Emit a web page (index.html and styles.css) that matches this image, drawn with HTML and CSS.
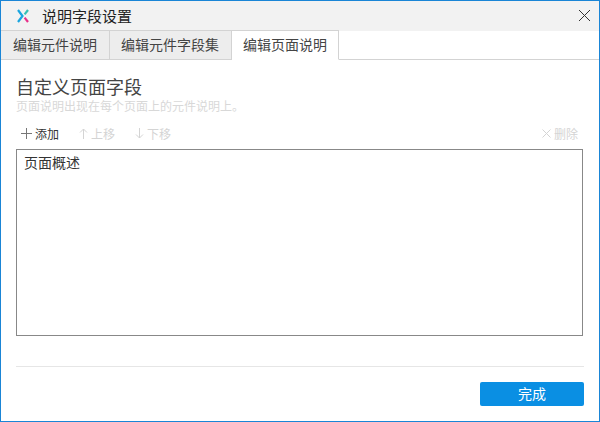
FILE: index.html
```html
<!DOCTYPE html>
<html lang="zh">
<head>
<meta charset="utf-8">
<title>说明字段设置</title>
<link rel="stylesheet" href="styles.css">
</head>
<body>
<div class="window">
  <header class="titlebar">
    <svg class="logo" width="12" height="14" viewBox="0 0 12 14">
      <path d="M1 1 L5.5 7 L1 13" fill="none" stroke="#1aa5df" stroke-width="2.2"/>
      <path d="M11 1 L7.6 5.4" fill="none" stroke="#35c0b5" stroke-width="2.2"/>
      <path d="M7.6 8.6 L11 13" fill="none" stroke="#e8308a" stroke-width="2.2"/>
    </svg>
    <span class="title">说明字段设置</span>
    <svg class="close" width="11" height="11" viewBox="0 0 11 11">
      <path d="M0 0 L11 11 M11 0 L0 11" stroke="#333" stroke-width="1" fill="none"/>
    </svg>
  </header>
  <nav class="tabs">
    <div class="tab">编辑元件说明</div>
    <div class="tab">编辑元件字段集</div>
    <div class="tab active">编辑页面说明</div>
  </nav>
  <main class="content">
    <h1 class="heading">自定义页面字段</h1>
    <p class="hint">页面说明出现在每个页面上的元件说明上。</p>
    <div class="toolbar">
      <span class="tool"><svg width="11" height="11" viewBox="0 0 11 11"><path d="M5.5 0 V11 M0 5.5 H11" stroke="#777" fill="none"/></svg>添加</span>
      <span class="tool off"><svg width="9" height="11" viewBox="0 0 9 11"><path d="M4.5 11 V1 M1 4.5 L4.5 1 L8 4.5" stroke="#d4d4d4" fill="none"/></svg>上移</span>
      <span class="tool off"><svg width="9" height="11" viewBox="0 0 9 11"><path d="M4.5 0 V10 M1 6.5 L4.5 10 L8 6.5" stroke="#d4d4d4" fill="none"/></svg>下移</span>
      <span class="tool off del"><svg width="9" height="9" viewBox="0 0 9 9"><path d="M0.5 0.5 L8.5 8.5 M8.5 0.5 L0.5 8.5" stroke="#d4d4d4" fill="none"/></svg>删除</span>
    </div>
    <div class="list"><div class="item">页面概述</div></div>
  </main>
  <footer class="footer">
    <button class="done">完成</button>
  </footer>
</div>
</body>
</html>
```
FILE: styles.css
```css
* { box-sizing: border-box; }
html, body { margin: 0; padding: 0; }
body {
  width: 600px;
  height: 422px;
  overflow: hidden;
  font-family: "Noto Sans CJK SC", "Liberation Sans", sans-serif;
  font-size: 14px;
  color: #333;
  background: #fff;
}
.window {
  width: 600px;
  height: 422px;
  border: 1px solid #1a85d6;
  display: flex;
  flex-direction: column;
}
.titlebar {
  height: 29px;
  flex: none;
  background: #f2f2f2;
  display: flex;
  align-items: center;
  padding: 0 9px 0 16px;
}
.logo { flex: none; margin-right: 13px; }
.title { font-size: 15px; color: #222; flex: 1; line-height: 29px; }
.close { flex: none; }
.tabs {
  height: 30px;
  flex: none;
  display: flex;
  background: linear-gradient(#f2f2f2 0 1px, #fff 1px);
  border-bottom: 1px solid #d3d3d3;
}
.tab {
  height: 30px;
  padding: 0 12px 0 11px;
  line-height: 27px;
  background: #ededed;
  border-top: 1px solid #d3d3d3;
  border-right: 1px solid #d3d3d3;
  border-bottom: 1px solid #d3d3d3;
  white-space: nowrap;
  color: #444;
}
.tab:first-child { padding-left: 12px; }
.tab.active { background: #fff; border-bottom-color: #fff; padding-right: 11px; }
.content {
  flex: 1;
  padding: 14px 16px 0 15px;
  display: flex;
  flex-direction: column;
}
.heading {
  margin: 0;
  font-size: 18px;
  font-weight: 400;
  line-height: 24px;
  color: #444;
}
.hint {
  margin: 0;
  font-size: 12px;
  line-height: 16px;
  color: #d8d8d8;
}
.toolbar {
  display: flex;
  align-items: center;
  height: 20px;
  margin-top: 9px;
  padding: 0 5px;
  gap: 20px;
}
.tool {
  display: flex;
  align-items: center;
  gap: 3px;
  font-size: 12px;
  color: #333;
}
.tool.off { color: #d4d4d4; }
.tool.del { margin-left: auto; }
.list {
  margin-top: 6px;
  height: 187px;
  border: 1px solid #888;
}
.item {
  padding: 2px 7px;
  line-height: 20px;
}
.footer {
  height: 55px;
  flex: none;
  margin: 0 15px 0 15px;
  border-top: 1px solid #e6e6e6;
  display: flex;
  justify-content: flex-end;
  padding-top: 15px;
  align-items: flex-start;
}
.done {
  width: 104px;
  height: 24px;
  border: 0;
  border-radius: 2px;
  background: #0a8fe3;
  color: #fff;
  font: inherit;
  padding: 0 0 2px;
}
```
